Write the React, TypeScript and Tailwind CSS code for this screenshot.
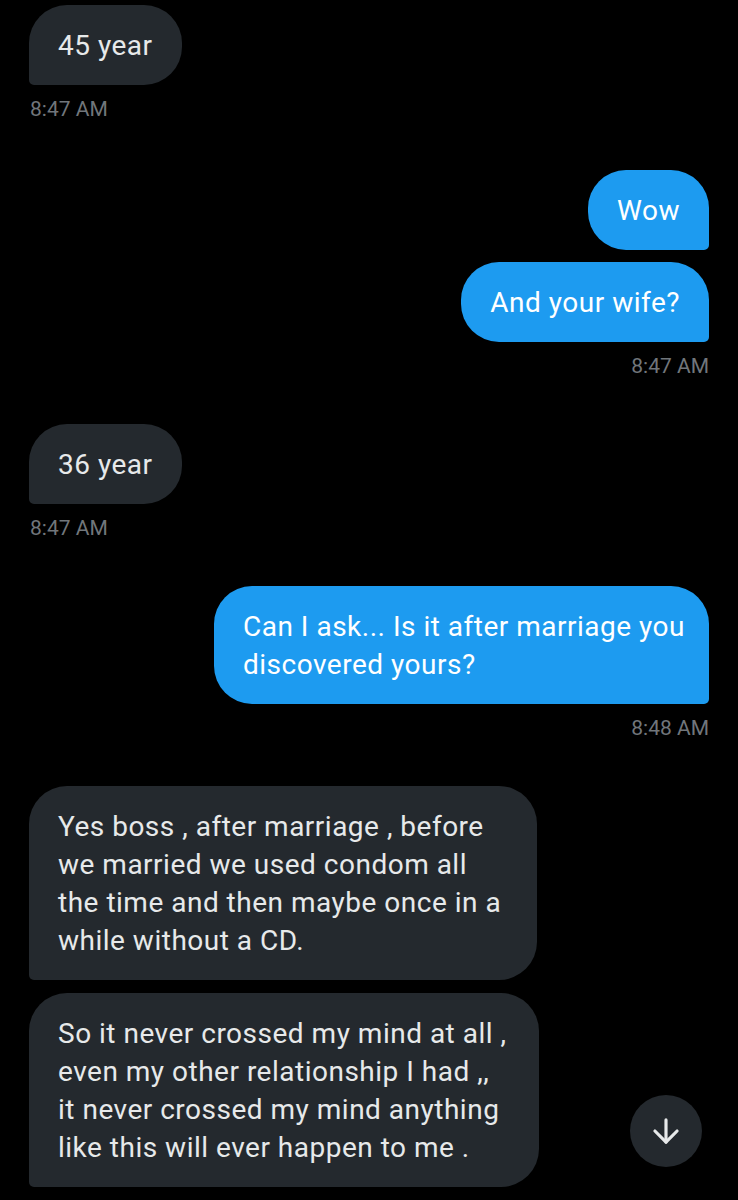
import { ArrowDown } from 'lucide-react'

const font = { fontFamily: 'Roboto, "Open Sans", sans-serif' }

const Received = ({ lines, className = '' }: { lines: string[]; className?: string }) => (
  <div
    className={`self-start rounded-[38px] rounded-bl-[5px] bg-[#24292e] px-[29px] pt-[22px] pb-[20px] text-[28px] leading-[38px] tracking-[0.5px] text-[#e7e9ea] ${className}`}
  >
    {lines.map((l, i) => (
      <div key={i} className="whitespace-nowrap">
        {l}
      </div>
    ))}
  </div>
)

const Sent = ({ lines, className = '' }: { lines: string[]; className?: string }) => (
  <div
    className={`self-end rounded-[38px] rounded-br-[5px] bg-[#1d9bf0] px-[29px] pt-[22px] pb-[20px] text-[28px] leading-[38px] tracking-[0.5px] text-white ${className}`}
  >
    {lines.map((l, i) => (
      <div key={i} className="whitespace-nowrap">
        {l}
      </div>
    ))}
  </div>
)

const Time = ({ t, right }: { t: string; right?: boolean }) => (
  <div
    className={`mt-[10px] text-[21px] leading-[28px] text-[#71767b] ${right ? 'self-end' : 'self-start pl-[1px]'}`}
  >
    {t}
  </div>
)

export default function App() {
  return (
    <div className="relative h-[1200px] w-[738px] overflow-hidden bg-black" style={font}>
      <div className="flex flex-col px-[29px] pt-[5px]">
        <Received lines={['45 year']} />
        <Time t="8:47 AM" />

        <Sent lines={['Wow']} className="mt-[47px]" />
        <Sent lines={['And your wife?']} className="mt-[12px]" />
        <Time t="8:47 AM" right />

        <Received lines={['36 year']} className="mt-[44px]" />
        <Time t="8:47 AM" />

        <Sent
          lines={['Can I ask... Is it after marriage you', 'discovered yours?']}
          className="mt-[44px] w-[495px]"
        />
        <Time t="8:48 AM" right />

        <Received
          lines={[
            'Yes boss , after marriage , before',
            'we married we used condom all',
            'the time and then maybe once in a',
            'while without a CD.',
          ]}
          className="mt-[44px] w-[508px]"
        />
        <Received
          lines={[
            'So it never crossed my mind at all ,',
            'even my other relationship I had ,,',
            'it never crossed my mind anything',
            'like this will ever happen to me .',
          ]}
          className="mt-[13px] w-[510px]"
        />
      </div>

      <button className="absolute left-[630px] top-[1095px] flex h-[72px] w-[72px] items-center justify-center rounded-full bg-[#24292e] text-[#e7e9ea]">
        <ArrowDown size={38} strokeWidth={2} />
      </button>
    </div>
  )
}
